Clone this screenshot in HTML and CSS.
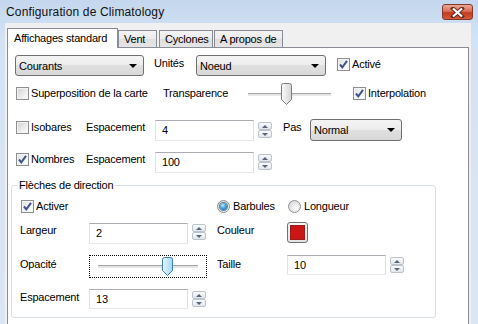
FILE: index.html
```html
<!DOCTYPE html>
<html lang="fr">
<head>
    <meta charset="UTF-8">
    <title>Configuration de Climatology</title>
    <link rel="stylesheet" href="styles.css">
</head>
<body>
<div class="window">
    <div class="titlebar">
        <span class="title">Configuration de Climatology</span>
        <div class="close-btn">
            <svg width="15" height="11" viewBox="0 0 15 11">
                <path d="M3 1.5 L12 9.5 M12 1.5 L3 9.5" stroke="#6b2a1c" stroke-width="4" stroke-linecap="square"/>
                <path d="M3 1.5 L12 9.5 M12 1.5 L3 9.5" stroke="#fff" stroke-width="2.2"/>
            </svg>
        </div>
    </div>

    <div class="client">
        <div class="tabs">
            <div class="tab active">Affichages standard</div>
            <div class="tab t-vent">Vent</div>
            <div class="tab t-cyc">Cyclones</div>
            <div class="tab t-apropos">A propos de</div>
        </div>

        <div class="panel">
            <!-- type de donnees -->
            <div class="row row-1">
                <div class="combo w-courants">Courants<span class="arrow"></span></div>
                <span class="lbl w-unites">Unités</span>
                <div class="combo w-noeud">Noeud<span class="arrow"></span></div>
                <div class="check-item ml-active"><span class="check on"><svg width="11" height="11" viewBox="0 0 11 11"><path d="M2 5.5 L4.3 8.3 L9 1.8" fill="none" stroke="#3f5486" stroke-width="2"/></svg></span>Activé</div>
            </div>

            <div class="row row-2">
                <div class="check-item w-superpos"><span class="check"></span>Superposition de la carte</div>
                <span class="lbl w-transp">Transparence</span>
                <div class="slider w-slider-transp">
                    <div class="track"></div>
                    <svg class="thumb" style="left: 33px" width="11" height="22" viewBox="0 0 11 22">
                        <defs><linearGradient id="tg" x1="0" y1="0" x2="1" y2="0"><stop offset="0" stop-color="#fbfbfb"/><stop offset="1" stop-color="#d4d4d4"/></linearGradient></defs>
                        <path d="M0.5 2.5 Q0.5 0.5 2.5 0.5 H8.5 Q10.5 0.5 10.5 2.5 V16.5 L5.5 21.5 L0.5 16.5 Z" fill="url(#tg)" stroke="#7d7d7d"/>
                    </svg>
                </div>
                <div class="check-item ml-interp"><span class="check on"><svg width="11" height="11" viewBox="0 0 11 11"><path d="M2 5.5 L4.3 8.3 L9 1.8" fill="none" stroke="#3f5486" stroke-width="2"/></svg></span>Interpolation</div>
            </div>

            <div class="row row-3">
                <div class="check-item w-isobares"><span class="check"></span>Isobares</div>
                <span class="lbl w-esp">Espacement</span>
                <div class="field">4</div>
                <div class="spin"><span class="up"></span><span class="down"></span></div>
                <span class="lbl w-pas">Pas</span>
                <div class="combo w-normal">Normal<span class="arrow"></span></div>
            </div>

            <div class="row row-4">
                <div class="check-item w-isobares"><span class="check on"><svg width="11" height="11" viewBox="0 0 11 11"><path d="M2 5.5 L4.3 8.3 L9 1.8" fill="none" stroke="#3f5486" stroke-width="2"/></svg></span>Nombres</div>
                <span class="lbl w-esp">Espacement</span>
                <div class="field">100</div>
                <div class="spin"><span class="up"></span><span class="down"></span></div>
            </div>

            <!-- fleches -->
            <div class="group">
                <span class="legend">Flèches de direction</span>

                <div class="grow grow-1">
                    <div class="check-item w-activer"><span class="check on"><svg width="11" height="11" viewBox="0 0 11 11"><path d="M2 5.5 L4.3 8.3 L9 1.8" fill="none" stroke="#3f5486" stroke-width="2"/></svg></span>Activer</div>
                    <div class="radio-item w-barbules"><span class="radio on"><span class="dot"></span></span>Barbules</div>
                    <div class="radio-item"><span class="radio"></span>Longueur</div>
                </div>

                <div class="grow grow-2">
                    <span class="lbl w-glbl">Largeur</span>
                    <div class="field">2</div>
                    <div class="spin"><span class="up"></span><span class="down"></span></div>
                    <span class="lbl w-glbl2">Couleur</span>
                    <div class="swatch"><span class="swatch-fill" style="background: #cc1616"></span></div>
                </div>

                <div class="grow grow-3">
                    <span class="lbl w-glbl mt1">Opacité</span>
                    <div class="slider focus w-slider-opac">
                        <div class="track"></div>
                        <svg class="thumb" style="left: 72px" width="11" height="19" viewBox="0 0 11 19">
                            <defs><linearGradient id="tb" x1="0" y1="0" x2="1" y2="0"><stop offset="0" stop-color="#e8f6fd"/><stop offset="1" stop-color="#9fd6f3"/></linearGradient></defs>
                            <path d="M0.5 2.5 Q0.5 0.5 2.5 0.5 H8.5 Q10.5 0.5 10.5 2.5 V13.5 L5.5 18.5 L0.5 13.5 Z" fill="url(#tb)" stroke="#3c7fb1"/>
                        </svg>
                    </div>
                    <span class="lbl w-glbl2 mt1">Taille</span>
                    <div class="field h20">10</div>
                    <div class="spin"><span class="up"></span><span class="down"></span></div>
                </div>

                <div class="grow grow-4">
                    <span class="lbl w-glbl">Espacement</span>
                    <div class="field h20">13</div>
                    <div class="spin"><span class="up"></span><span class="down"></span></div>
                </div>
            </div>
        </div>
    </div>
</div>
</body>
</html>
```

FILE: styles.css
```css
* { box-sizing: border-box; }

body { margin: 0; font-family: "Liberation Sans", Arial, sans-serif; font-size: 11px; letter-spacing: -0.2px; line-height: 16px; color: #000; background: #cfdff2; }

.window { width: 478px; height: 324px; overflow: hidden; display: flex; flex-direction: column; background: linear-gradient(#c4d7ee, #d4e3f4 40px, #d9e6f4); }

/* title bar */
.titlebar { height: 23px; flex: none; display: flex; align-items: flex-start; padding: 4px 5px 0 6px; }
.title { flex: 1; font-size: 12px; letter-spacing: 0.15px; color: #111; }
.close-btn {
    width: 31px; height: 16px;
    border: 1px solid #83392a; border-radius: 3px;
    background: linear-gradient(#eaa996, #d86e55 45%, #c53c20 55%, #d25b3e);
    display: flex; align-items: center; justify-content: center;
}

/* client area */
.client { flex: 1; margin: 0 7px 0 5px; background: #f0f0f0; padding: 5px 2px 0; display: flex; flex-direction: column; }

.tabs { display: flex; align-items: flex-end; height: 20px; flex: none; position: relative; z-index: 1; }
.tab {
    height: 17px; margin-bottom: 1px; padding: 0 0 0 5px;
    border: 1px solid #898c95; border-bottom: none;
    background: linear-gradient(#f3f3f3, #ebebeb 50%, #dedede 50%, #e5e5e5);
    white-space: nowrap;
}
.tab.active { width: 111px; height: 20px; margin-bottom: 0; padding: 1px 0 0 6px; background: #fff; }
.t-vent { width: 39px; }
.t-cyc { width: 54px; margin-left: 2px; }
.t-apropos { width: 69px; margin-left: 1px; }

.panel { flex: 1; margin-top: -1px; background: #fff; border: 1px solid #898c95; border-bottom: none; }

/* rows */
.row { display: flex; align-items: flex-start; padding-left: 7px; }
.row-1 { margin-top: 7px; height: 21px; }
.row-2 { margin-top: 7px; height: 22px; }
.row-3 { margin-top: 14px; height: 22px; }
.row-4 { margin-top: 10px; height: 21px; }

.lbl { white-space: nowrap; flex: none; }
.mt1 { margin-top: 1px; }
.w-unites { width: 42px; margin-left: 10px; }
.w-transp { width: 85px; margin-top: 2px; }
.w-esp { width: 69px; }
.w-pas { width: 27px; margin-left: 11px; }

/* combo */
.combo {
    position: relative; flex: none; height: 21px;
    border: 1px solid #707070; border-radius: 3px;
    background: linear-gradient(#f4f4f4, #ececec 50%, #e0e0e0 50%, #d8d8d8);
    padding: 2px 0 0 3px;
}
.combo .arrow {
    position: absolute; right: 6px; top: 8px;
    border-left: 4px solid transparent; border-right: 4px solid transparent; border-top: 4px solid #000;
}
.w-courants { width: 129px; }
.w-noeud { width: 130px; }
.w-normal { width: 92px; height: 22px; }

/* checkboxes */
.check-item { display: flex; align-items: center; gap: 2px; white-space: nowrap; flex: none; height: 16px; }
.check {
    width: 13px; height: 13px; flex: none;
    border: 1px solid #8e8f8f;
    background: linear-gradient(135deg, #d0d0d0, #f6f6f6 80%);
    box-shadow: inset 0 0 0 1px #f4f4f4;
}
.check svg { display: block; margin: 0; }
.check.on { background: linear-gradient(135deg, #e2e2e2, #fbfbfb 80%); }
.ml-active { margin-left: 11px; margin-top: 1px; }
.w-superpos { width: 147px; margin-left: 1px; margin-top: 2px; }
.ml-interp { margin-left: 22px; margin-top: 2px; }
.w-isobares { width: 70px; margin-left: 1px; }

/* radio */
.radio-item { display: flex; align-items: center; gap: 3px; white-space: nowrap; flex: none; height: 16px; }
.radio {
    width: 13px; height: 13px; border-radius: 50%; flex: none;
    border: 1px solid #8e8f8f;
    background: radial-gradient(circle at 65% 65%, #fbfbfb, #d4d4d4);
    display: flex; align-items: center; justify-content: center;
}
.radio .dot {
    width: 7px; height: 7px; border-radius: 50%;
    background: radial-gradient(circle at 40% 35%, #c9ecfc 0, #4aa2dc 45%, #114c86 100%);
    box-shadow: 0 0 0 1px #5f7d99;
}
.w-barbules { width: 71px; }

/* text fields */
.field {
    width: 99px; height: 21px; flex: none;
    border: 1px solid #e3e9ef; border-top-color: #abadb3; border-left-color: #e2e3ea; border-right-color: #dbdfe6;
    padding: 1px 0 0 6px; margin-top: 1px; background: #fff;
}
.field.h20 { height: 20px; margin-top: 0; }
.spin { width: 14px; height: 16px; flex: none; display: flex; flex-direction: column; margin: 3px 0 0 4px; }
.spin span {
    flex: 1; display: flex; align-items: center; justify-content: center;
    border: 1px solid #bcc3ce; border-radius: 2px;
    background: linear-gradient(#fafafa, #e3e6eb);
}
.spin span::before { content: ""; border-left: 3px solid transparent; border-right: 3px solid transparent; }
.spin .up::before { border-bottom: 3px solid #56647c; }
.spin .down::before { border-top: 3px solid #56647c; }

/* sliders */
.slider { position: relative; flex: none; display: flex; align-items: center; }
.slider .track { flex: 1; height: 3px; border-top: 1px solid #a5a5a5; border-bottom: 1px solid #e7e7e7; background: #e3e3e3; }
.slider .thumb { position: absolute; top: 0; }
.w-slider-transp { width: 83px; height: 22px; }
.slider.focus { border: 1px dotted #000; padding: 0 8px; }
.w-slider-opac { width: 118px; height: 23px; }
.w-slider-opac .thumb { top: 1px; }

/* group box */
.group {
    position: relative; width: 425px; margin: 13px 0 0 3px;
    border: 1px solid #d5dfe5; border-radius: 3px; padding-bottom: 8px;
}
.legend { position: absolute; top: -9px; left: 5px; padding: 0 2px; background: #fff; }
.grow { display: flex; align-items: flex-start; padding-left: 8px; }
.grow-1 { margin-top: 12px; height: 16px; }
.grow-2 { margin-top: 8px; height: 21px; }
.grow-3 { margin-top: 12px; height: 23px; }
.grow-4 { margin-top: 11px; height: 20px; }
.w-activer { width: 196px; margin-left: 1px; }
.w-glbl { width: 69px; }
.w-glbl2 { width: 70px; margin-left: 11px; }
.grow-3 .w-glbl2 { margin-left: 10px; }
.grow-2 .spin, .grow-3 .spin, .grow-4 .spin { margin-top: 2px; }

.swatch {
    width: 21px; height: 21px; flex: none;
    border: 1px solid #707070; border-radius: 3px;
    background: linear-gradient(#f6f6f6, #e2e2e2);
    padding: 2px;
}
.swatch-fill { display: block; width: 15px; height: 15px; border: 1px solid #9b1a1a; }
```
